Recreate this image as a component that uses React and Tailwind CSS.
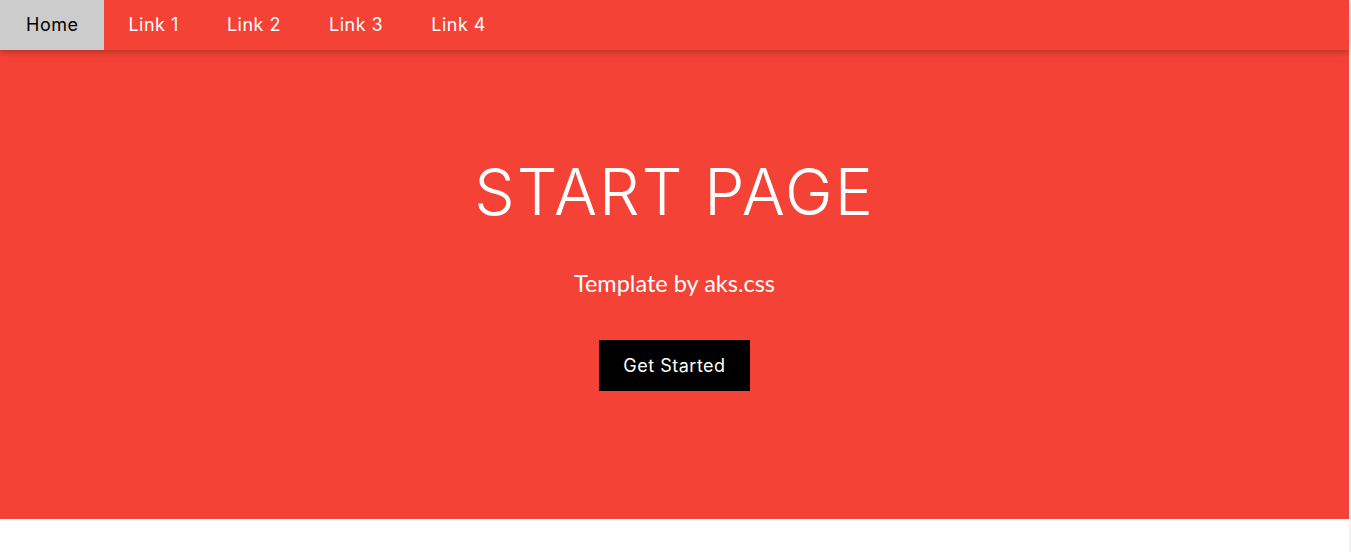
const links = ['Link 1', 'Link 2', 'Link 3', 'Link 4'];

const App = () => {
  return (
    <div className="min-h-[552px] bg-[#f1f1f1]">
      <div className="w-[1349px] min-h-[552px] bg-white">
        <nav className="relative z-10 flex h-[50px] bg-[#f44336] text-[18px] tracking-[0.5px] shadow-[0_2px_5px_rgba(0,0,0,0.16),0_2px_10px_rgba(0,0,0,0.12)] [font-family:Inter,'Open_Sans',sans-serif]">
          <a href="#" className="flex items-center bg-[#cccccc] px-[26px] pb-px text-black">
            Home
          </a>
          {links.map((l) => (
            <a key={l} href="#" className="flex items-center px-6 pb-px text-white">
              {l}
            </a>
          ))}
        </nav>

        <header className="flex h-[469px] flex-col items-center bg-[#f44336] pt-[110px] text-white">
          <h1 className="text-[64px] font-[350] leading-none tracking-[2px] [font-family:Inter,sans-serif]">
            START PAGE
          </h1>
          <p className="mt-[42px] text-[23.5px] [font-family:Lato,sans-serif]">
            Template by aks.css
          </p>
          <button className="mt-[39px] h-[51px] bg-black px-6 text-[18px] tracking-[0.5px] text-white [font-family:Inter,sans-serif]">
            Get Started
          </button>
        </header>
      </div>
    </div>
  );
};

export default App;
